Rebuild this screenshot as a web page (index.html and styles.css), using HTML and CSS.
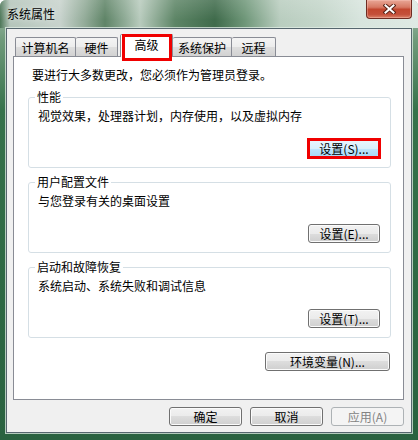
FILE: index.html
```html
<!DOCTYPE html>
<html lang="zh-CN">
  <head>
    <meta charset="UTF-8" />
    <title>系统属性</title>
    <link rel="stylesheet" href="styles.css">
  </head>
  <body>
    <div class="window">
      <div class="titlebar">
        <span class="title">系统属性</span>
        <div class="close">
          <svg width="13" height="10" viewBox="0 0 13 10">
            <path d="M2.5 1.5 L10.5 8.5 M10.5 1.5 L2.5 8.5" stroke="#5a2418" stroke-width="4" stroke-linecap="square" />
            <path d="M2.5 1.5 L10.5 8.5 M10.5 1.5 L2.5 8.5" stroke="#ffffff" stroke-width="2" stroke-linecap="square" />
          </svg>
        </div>
      </div>

      <div class="client">
        <div class="tabs">
          <div class="tab tab-name">计算机名</div>
          <div class="tab tab-hw">硬件</div>
          <div class="tab selected">高级</div>
          <div class="tab tab-prot">系统保护</div>
          <div class="tab tab-remote">远程</div>
        </div>

        <div class="panel">
          <div class="intro">要进行大多数更改，您必须作为管理员登录。</div>

          <fieldset class="group">
            <legend>性能</legend>
            <div class="desc">视觉效果，处理器计划，内存使用，以及虚拟内存</div>
            <div class="actions">
              <button class="btn btn-set default marked">设置(S)...</button>
            </div>
          </fieldset>

          <fieldset class="group">
            <legend>用户配置文件</legend>
            <div class="desc">与您登录有关的桌面设置</div>
            <div class="actions">
              <button class="btn btn-set">设置(E)...</button>
            </div>
          </fieldset>

          <fieldset class="group">
            <legend>启动和故障恢复</legend>
            <div class="desc">系统启动、系统失败和调试信息</div>
            <div class="actions">
              <button class="btn btn-set">设置(T)...</button>
            </div>
          </fieldset>

          <div class="env-row">
            <button class="btn btn-env">环境变量(N)...</button>
          </div>
        </div>

        <div class="footer">
          <button class="btn btn-dlg">确定</button>
          <button class="btn btn-dlg">取消</button>
          <button class="btn btn-dlg" disabled>应用(A)</button>
        </div>
      </div>
    </div>
  </body>
</html>
```

FILE: styles.css
```css
body {
  margin: 0;
  font-family: "Noto Sans CJK SC", "Noto Sans", sans-serif;
  font-size: 12px;
  color: #000;
}
.window {
  width: 418px;
  height: 440px;
  display: flex;
  flex-direction: column;
  border-radius: 6px 6px 0 0;
  overflow: hidden;
  background: linear-gradient(180deg, #a9c0b0 0, #6f9a7a 40px, #36724b 110px, #2d6843 300px, #2a6240 440px);
}
.titlebar {
  height: 28px;
  display: flex;
  align-items: flex-start;
  padding-left: 7px;
  background:
    linear-gradient(180deg, rgba(255, 255, 255, 0.15), rgba(255, 255, 255, 0) 70%),
    linear-gradient(90deg, #4d7758 0, #b4c5ba 10px, #c8d3cd 60px, #92ab98 85px, #5f8467 105px, #8fab96 125px, #b8cbbd 140px, #5d8566 175px, #3f6b4b 215px, #6f9779 245px, #b9cdbf 280px, #c4d6ca 320px, #d7e4dd 360px, #dfeae4 418px);
}
.title {
  padding-top: 6px;
  line-height: 16px;
  text-shadow: 0 0 6px rgba(255, 255, 255, 0.8);
}
.close {
  margin-left: auto;
  margin-right: 6px;
  width: 46px;
  height: 19px;
  box-sizing: border-box;
  border: 1px solid #6e2c22;
  border-top: none;
  border-radius: 0 0 4px 4px;
  display: flex;
  align-items: center;
  justify-content: center;
  background: linear-gradient(180deg, #e9a796 0, #d77964 40%, #c2472f 52%, #c4503a 80%, #dc8269 100%);
  box-shadow: inset 0 0 0 1px rgba(255, 210, 200, 0.35);
}
.client {
  margin: 0 6px;
  height: 405px;
  box-sizing: border-box;
  border: 1px solid #56666e;
  box-shadow: 0 0 0 1px rgba(225, 238, 230, 0.75);
  background: #f0f0f0;
  padding: 0 7px 6px 6px;
  display: flex;
  flex-direction: column;
}
.tabs {
  position: relative;
  z-index: 1;
  height: 28px;
  box-sizing: border-box;
  padding: 5px 0 0 2px;
  margin-bottom: -1px;
  display: flex;
  align-items: flex-end;
}
.tab {
  height: 19px;
  box-sizing: border-box;
  margin-bottom: 1px;
  padding-top: 2px;
  line-height: 16px;
  text-align: center;
  border: 1px solid #898c95;
  border-bottom: none;
  border-radius: 2px 2px 0 0;
  background: linear-gradient(180deg, #f4f4f4 0, #ececec 50%, #dedede 50%, #d2d2d2 100%);
}
.tab + .tab {
  border-left: none;
}
.tab-name {
  width: 61px;
}
.tab-hw {
  width: 42px;
}
.tab-prot {
  width: 59px;
}
.tab-remote {
  width: 44px;
}
.tab.selected {
  position: relative;
  width: 53px;
  height: 23px;
  margin: 0 0 0 2px;
  padding-top: 2px;
  border-left: 1px solid #898c95;
  border-right: 1px solid #898c95;
  background: #fff;
}
.tab.selected + .tab {
  border-left: none;
}
.tab.selected::after {
  content: "";
  position: absolute;
  top: -1px;
  left: 1px;
  right: 0;
  bottom: -4px;
  border: 3px solid #f00000;
}
.panel {
  flex: 1;
  background: #fff;
  border: 1px solid #898c95;
  padding: 10px 12px 0 14px;
}
.intro {
  line-height: 16px;
  padding-left: 4px;
}
.group {
  margin: 6px 0 0;
  padding: 3px 10px 9px 9px;
  border: 1px solid #d5dfe5;
  border-radius: 3px;
  min-width: 0;
}
.group legend {
  padding: 0 2px;
  margin-left: -3px;
  line-height: 16px;
}
.desc {
  line-height: 16px;
}
.actions {
  margin-top: 15px;
  display: flex;
  justify-content: flex-end;
}
.btn {
  height: 19px;
  box-sizing: border-box;
  padding: 0;
  font-family: "Noto Sans CJK SC", "Noto Sans", sans-serif;
  font-size: 12px;
  line-height: 16px;
  color: #000;
  border: 1px solid #707070;
  border-radius: 3px;
  background: linear-gradient(180deg, #f2f2f2 0, #ebebeb 50%, #dddddd 50%, #cfcfcf 100%);
  box-shadow: inset 0 0 0 1px #fbfbfb;
}
.btn-set {
  width: 72px;
}
.btn.default {
  border-color: #3c7fb1;
  background: linear-gradient(180deg, #eaf6fd 0, #d9f0fc 50%, #bee6fd 50%, #a7d9f5 100%);
}
.marked {
  position: relative;
}
.marked::after {
  content: "";
  position: absolute;
  top: -2px;
  left: -2px;
  right: -2px;
  bottom: -2px;
  border: 3px solid #f00000;
}
.env-row {
  margin-top: 14px;
  padding-right: 1px;
  display: flex;
  justify-content: flex-end;
}
.btn-env {
  width: 125px;
}
.footer {
  margin-top: 7px;
  display: flex;
  justify-content: flex-end;
  gap: 8px;
}
.btn-dlg {
  width: 73px;
}
.btn:disabled {
  color: #838383;
  border-color: #adb2b5;
  background: #f4f4f4;
  box-shadow: none;
}
```
